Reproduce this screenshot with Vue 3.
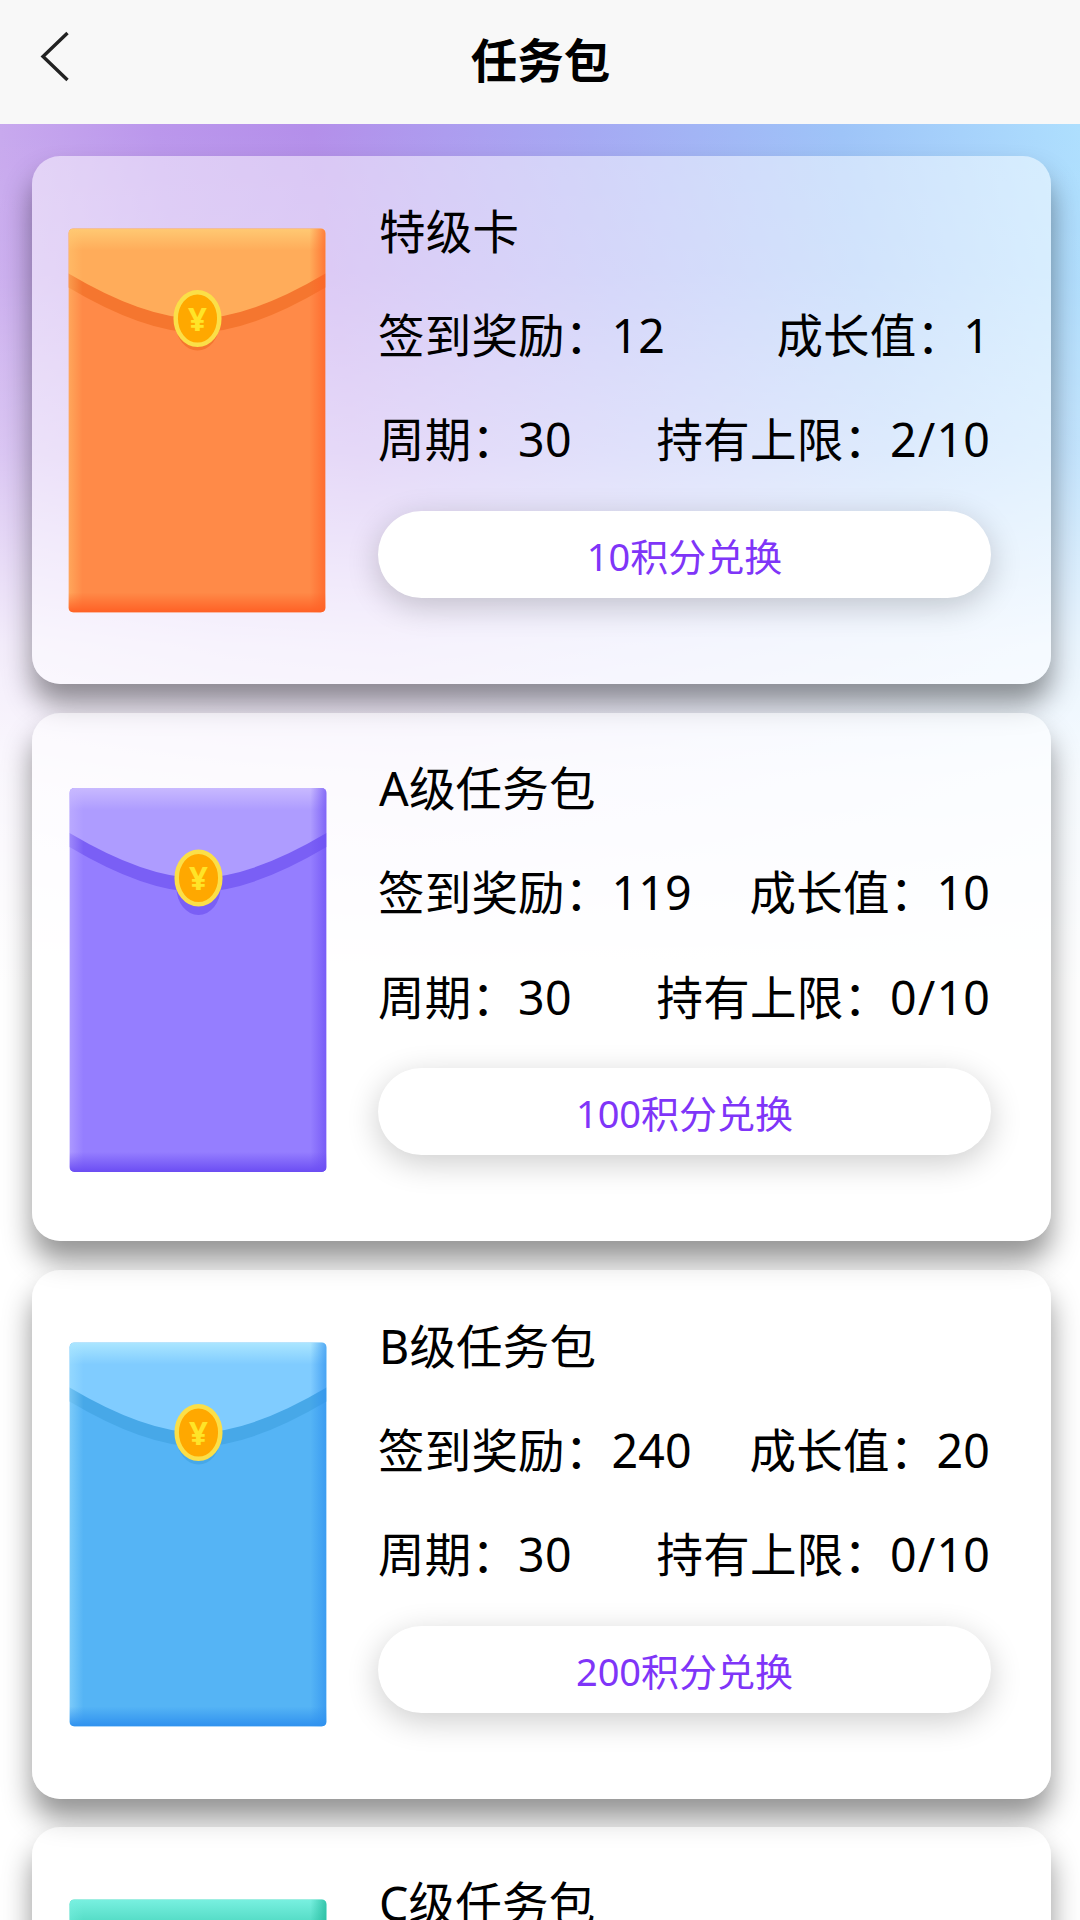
<template>
  <div class="page">
    <header class="nav-bar">
      <button type="button" class="nav-back" aria-label="返回">
        <svg width="30" height="52" viewBox="0 0 30 52" aria-hidden="true">
          <path d="M27.5 2 L3 25.5 L27.5 49" />
        </svg>
      </button>
      <h1 class="nav-title">任务包</h1>
    </header>

    <main class="pack-list">
      <section v-for="pack in packs" :key="pack.name" class="pack-card" :class="pack.theme">
        <svg class="envelope" width="264" height="400" viewBox="0 0 264 400" aria-hidden="true">
          <defs>
            <clipPath :id="`${pack.theme}-clip`">
              <rect width="257" height="384" rx="5" />
            </clipPath>
            <linearGradient :id="`${pack.theme}-top`" x1="0" y1="0" x2="0" y2="1">
              <stop offset="0" class="stop-light" />
              <stop offset="1" class="stop-light clear" />
            </linearGradient>
            <linearGradient :id="`${pack.theme}-left`" x1="0" y1="0" x2="1" y2="0">
              <stop offset="0" class="stop-light soft" />
              <stop offset="1" class="stop-light clear" />
            </linearGradient>
            <linearGradient :id="`${pack.theme}-right`" x1="1" y1="0" x2="0" y2="0">
              <stop offset="0" class="stop-dark soft" />
              <stop offset="1" class="stop-dark clear" />
            </linearGradient>
            <linearGradient :id="`${pack.theme}-bottom`" x1="0" y1="1" x2="0" y2="0">
              <stop offset="0" class="stop-dark" />
              <stop offset="1" class="stop-dark clear" />
            </linearGradient>
          </defs>
          <g :transform="`translate(${pack.shiftX} ${pack.shiftY})`">
            <g :clip-path="`url(#${pack.theme}-clip)`">
              <rect class="env-body" width="257" height="384" />
              <path class="env-band" d="M0 45 H257 V59 Q181 104 128.5 104 Q76 104 0 59 Z" />
              <path class="env-flap" d="M0 0 H257 V45 Q181 90 128.5 90 Q76 90 0 45 Z" />
              <rect width="257" height="22" :fill="`url(#${pack.theme}-top)`" />
              <rect width="14" height="384" :fill="`url(#${pack.theme}-left)`" />
              <rect x="241" width="16" height="384" :fill="`url(#${pack.theme}-right)`" />
              <rect y="364" width="257" height="20" :fill="`url(#${pack.theme}-bottom)`" />
            </g>
            <ellipse class="env-band" cx="129" :cy="pack.coinShadow" rx="22" ry="27" />
            <ellipse class="coin-rim" cx="129" cy="90" rx="21.8" ry="26.3" />
            <text class="coin-sign" x="129" y="102" text-anchor="middle">¥</text>
          </g>
        </svg>

        <div class="pack-info">
          <h2 class="pack-name">{{ pack.name }}</h2>
          <div class="pack-row">
            <span>签到奖励：{{ pack.reward }}</span>
            <span>成长值：{{ pack.growth }}</span>
          </div>
          <div class="pack-row">
            <span>周期：{{ pack.period }}</span>
            <span>持有上限：{{ pack.held }}<i class="slash">/</i>{{ pack.limit }}</span>
          </div>
          <button type="button" class="exchange">{{ pack.price }}积分兑换</button>
        </div>
      </section>
    </main>
  </div>
</template>

<script setup>
const packs = [
  { name: "特级卡", theme: "orange", reward: 12, growth: 1, period: 30, held: 2, limit: 10, price: 10, shiftX: 0.5, shiftY: 2.5, coinShadow: 95 },
  { name: "A级任务包", theme: "purple", reward: 119, growth: 10, period: 30, held: 0, limit: 10, price: 100, shiftX: 1.5, shiftY: 5, coinShadow: 100 },
  { name: "B级任务包", theme: "blue", reward: 240, growth: 20, period: 30, held: 0, limit: 10, price: 200, shiftX: 1.5, shiftY: 2.5, coinShadow: 95 },
  { name: "C级任务包", theme: "green", reward: 360, growth: 30, period: 30, held: 0, limit: 10, price: 300, shiftX: 1.5, shiftY: 2.5, coinShadow: 95 },
];
</script>

<style>
body {
  margin: 0;
  background: #ffffff;
}
</style>

<style scoped>
.page {
  height: 100vh;
  overflow: hidden;
  display: flex;
  flex-direction: column;
  color: #000000;
  font-family: "Noto Sans", "Noto Sans CJK SC", sans-serif;
}

.nav-bar {
  flex: none;
  display: grid;
  grid-template-columns: 120px 1fr 120px;
  align-items: center;
  height: 124px;
  background: #f8f8f8;
}

.nav-back {
  display: flex;
  padding: 0 0 10px 40px;
  border: none;
  background: transparent;
}

.nav-back path {
  fill: none;
  stroke: #222222;
  stroke-width: 3.4;
}

.nav-title {
  margin: 0;
  padding: 0 0 5px 1px;
  font-size: 46.5px;
  font-weight: 700;
  line-height: 60px;
  text-align: center;
}

.pack-list {
  flex: 1;
  min-height: 0;
  overflow: hidden;
  padding: 31.5px 29px 0 32px;
  background:
    linear-gradient(180deg, rgba(255, 255, 255, 0) 0, rgba(255, 255, 255, 0.06) 150px, rgba(255, 255, 255, 0.3) 330px, rgba(255, 255, 255, 0.76) 520px, rgba(255, 255, 255, 0.9) 650px, #ffffff 860px),
    linear-gradient(82deg, #d2b9f0 0, #c8a9ee 10%, #bb97ec 23%, #b48fea 36%, #ad9cef 47%, #a5a9f3 59%, #9ec4f8 80%, #aedffe 100%);
  background-repeat: no-repeat;
  background-size: 100% 862px;
}

.pack-card {
  box-sizing: border-box;
  display: flex;
  height: 528.5px;
  margin-bottom: 28.8px;
  padding: 70px 60px 0 36px;
  border-radius: 28px;
  background: rgba(255, 255, 255, 0.5);
  box-shadow: 0 20px 29px rgba(0, 0, 0, 0.42);
}

.envelope {
  flex: none;
  overflow: visible;
}

.env-body {
  fill: var(--body);
}

.env-flap {
  fill: var(--flap);
}

.env-band {
  fill: var(--band);
}

.stop-light {
  stop-color: var(--light);
}

.stop-light.soft {
  stop-opacity: 0.45;
}

.stop-dark {
  stop-color: var(--dark);
}

.stop-dark.soft {
  stop-opacity: 0.7;
}

.stop-light.clear,
.stop-dark.clear {
  stop-opacity: 0;
}

.coin-rim {
  fill: #ffa800;
  stroke: #fbdf48;
  stroke-width: 4.5;
}

.coin-sign {
  fill: #ffe428;
  font-size: 33px;
  font-weight: 700;
}

.orange {
  --body: #ff8a48;
  --flap: #ffac5a;
  --band: #f5762f;
  --light: #ffc973;
  --dark: #ff6025;
}

.purple {
  --body: #957eff;
  --flap: #ae9cff;
  --band: #7a5ff5;
  --light: #c8b9ff;
  --dark: #6b4df3;
}

.blue {
  --body: #55b4f5;
  --flap: #80ccff;
  --band: #47a8e8;
  --light: #abe6ff;
  --dark: #2f91ef;
}

.green {
  --body: #35cdb4;
  --flap: #55dcc6;
  --band: #22b79e;
  --light: #78f0e0;
  --dark: #1bb597;
}

.pack-info {
  flex: 1;
  margin-top: -46.5px;
  margin-left: 46px;
}

.pack-name,
.pack-row {
  height: 104.2px;
  margin: 0;
  font-size: 46.5px;
  font-weight: 400;
  line-height: 104.2px;
  letter-spacing: 0.2px;
  white-space: nowrap;
}

.pack-name {
  padding-left: 1px;
}

.pack-row {
  display: flex;
  justify-content: space-between;
  padding-right: 1px;
}

.slash {
  margin: 0 1px;
  font-style: normal;
}

.exchange {
  display: block;
  width: 100%;
  height: 87px;
  margin-top: 19.5px;
  padding: 3px 0 0;
  border: none;
  border-radius: 44px;
  background: #ffffff;
  box-shadow: 0 8px 32px rgba(0, 0, 0, 0.2);
  color: #7f35f8;
  font-family: inherit;
  font-size: 38px;
  line-height: 84px;
}
</style>
